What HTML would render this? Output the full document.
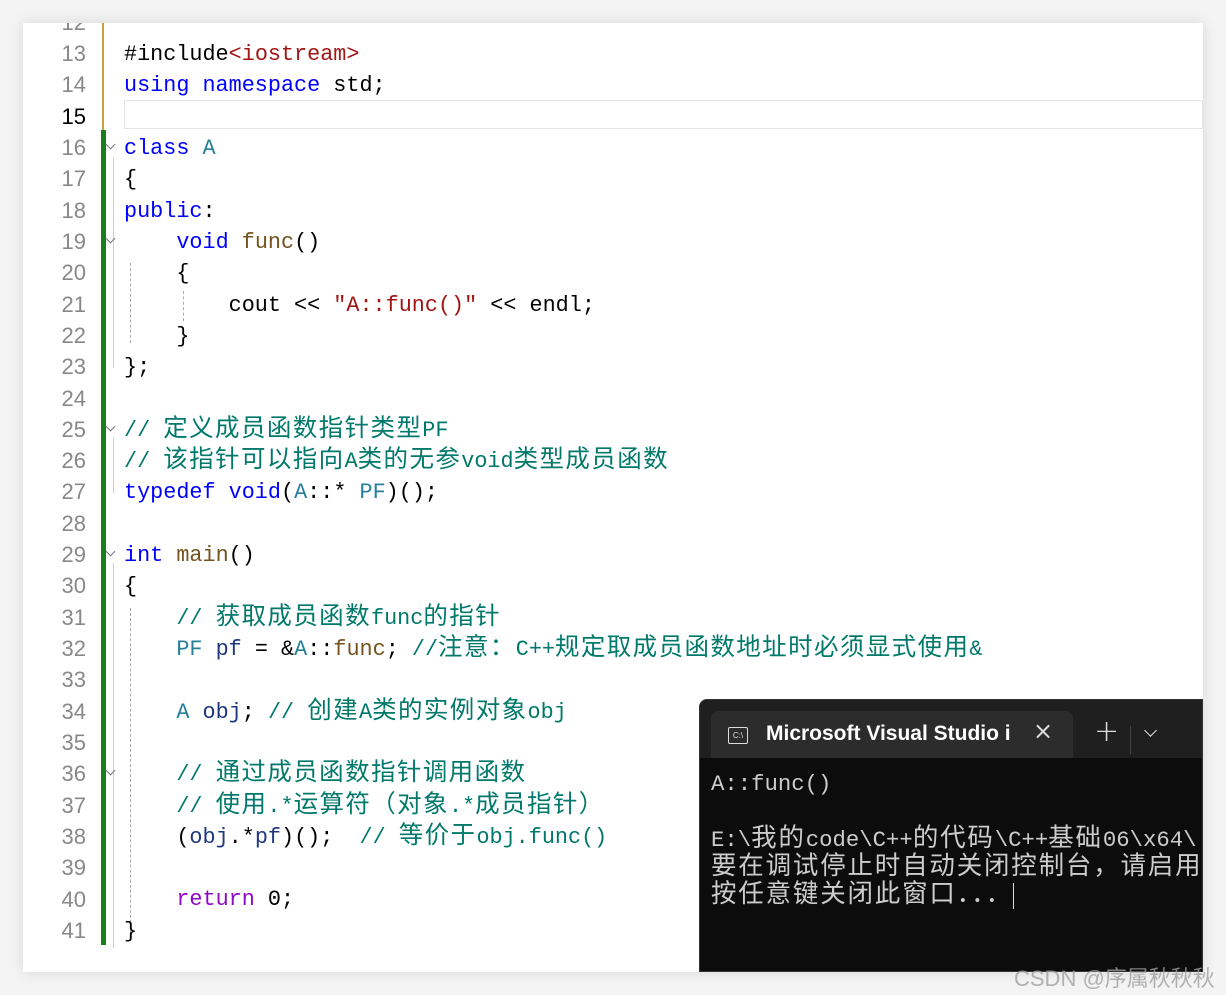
<!DOCTYPE html><html><head><meta charset="utf-8"><style>
body{margin:0;width:1226px;height:995px;background:#f4f4f4;position:relative;overflow:hidden;font-family:"Liberation Mono","Noto Sans CJK SC",monospace}
.card{position:absolute;left:23px;top:23px;width:1180px;height:949px;background:#fff;box-shadow:0 0 14px rgba(0,0,0,.12);overflow:hidden}
.ln{position:absolute;left:0;width:63px;text-align:right;color:#888;font-size:22px;font-family:"Liberation Sans",sans-serif}
.code{position:absolute;left:101px;font-size:21.8px;white-space:pre;color:#000;line-height:31.32px}
.code .cj{font-size:24.5px;letter-spacing:1.4px;line-height:10px}
.tt .cj{font-size:25.5px;letter-spacing:1.8px;line-height:10px}
.k{color:#0000ff}.c{color:#00796b}.f{color:#74531f}.s{color:#a31515}.t{color:#267f99}.v{color:#1f377f}.p{color:#8f08c4}
.term{position:absolute;left:699px;top:699px;width:504px;height:273px;background:#0c0c0c;border-radius:8px 0 0 0;border:1px solid #333;box-sizing:border-box;overflow:hidden}
.bar{position:absolute;left:0;top:0;right:0;height:58px;background:#1f1f1f}
.tab{position:absolute;left:11px;top:11px;width:362px;height:47px;background:#2c2c2c;border-radius:8px 8px 0 0}
.tt{position:absolute;color:#cccccc;font-size:22.3px;white-space:pre;font-family:"Liberation Mono","Noto Sans CJK SC",monospace;line-height:28px}
.fold{position:absolute;left:84px;width:6px;height:6px;border-right:1px solid #777;border-bottom:1px solid #777;transform:rotate(45deg)}
</style></head><body>
<div class="card">
<div style="position:absolute;left:79px;top:0;width:2px;height:107px;background:#c8a040"></div>
<div style="position:absolute;left:78px;top:107px;width:5px;height:815px;background:#1a7f1a"></div>
<div style="position:absolute;left:101px;top:77px;width:1079px;height:29px;border:1px solid #e5e5e5;box-sizing:border-box"></div>
<div style="position:absolute;left:107px;top:240px;height:80px;border-left:1px dashed #aaa"></div>
<div style="position:absolute;left:160px;top:268px;height:30px;border-left:1px dashed #aaa"></div>
<div style="position:absolute;left:107px;top:585px;height:330px;border-left:1px dashed #aaa"></div>
<div style="position:absolute;left:90px;top:135px;height:210px;border-left:1px solid #ccc"></div>
<div style="position:absolute;left:90px;top:415px;height:55px;border-left:1px solid #ccc"></div>
<div style="position:absolute;left:90px;top:540px;height:385px;border-left:1px solid #ccc"></div>
<div class="fold" style="top:118px"></div>
<div class="fold" style="top:212px"></div>
<div class="fold" style="top:400px"></div>
<div class="fold" style="top:525px"></div>
<div class="fold" style="top:744px"></div>
<div id="ln"></div>
<div class="code" style="top:16px">#include<span class="s">&lt;iostream&gt;</span>
<span class="k">using namespace</span> std;

<span class="k">class</span> <span class="t">A</span>
{
<span class="k">public</span>:
    <span class="k">void</span> <span class="f">func</span>()
    {
        cout &lt;&lt; <span class="s">"A::func()"</span> &lt;&lt; endl;
    }
};

<span class="c">// 定义成员函数指针类型PF</span>
<span class="c">// 该指针可以指向A类的无参void类型成员函数</span>
<span class="k">typedef void</span>(<span class="t">A</span>::* <span class="t">PF</span>)();

<span class="k">int</span> <span class="f">main</span>()
{
    <span class="c">// 获取成员函数func的指针</span>
    <span class="t">PF</span> <span class="v">pf</span> = &amp;<span class="t">A</span>::<span class="f">func</span>; <span class="c">//注意：C++规定取成员函数地址时必须显式使用&amp;</span>

    <span class="t">A</span> <span class="v">obj</span>; <span class="c">// 创建A类的实例对象obj</span>

    <span class="c">// 通过成员函数指针调用函数</span>
    <span class="c">// 使用.*运算符（对象.*成员指针）</span>
    (<span class="v">obj</span>.*<span class="v">pf</span>)();  <span class="c">// 等价于obj.func()</span>

    <span class="p">return</span> 0;
}</div>
</div>
<div class="term">
<div class="bar"></div><div class="tab"></div>
<div style="position:absolute;left:28px;top:27px;width:18px;height:15px;border:1.5px solid #ddd;border-radius:2px;color:#ddd;font-size:8px;line-height:15px;text-align:center;font-family:'Liberation Sans'">C:\</div>
<div style="position:absolute;left:66px;top:22px;color:#fff;font-size:21px;font-weight:bold;font-family:'Liberation Sans',sans-serif;white-space:pre">Microsoft Visual Studio i</div>
<div style="position:absolute;left:333px;top:17px;color:#ddd;font-size:24px;font-family:'DejaVu Sans'">×</div>
<div style="position:absolute;left:394px;top:14px;color:#ddd;font-size:30px;font-family:'DejaVu Sans';font-weight:200">+</div>
<div style="position:absolute;left:430px;top:26px;width:1px;height:28px;background:#444"></div>
<div style="position:absolute;left:446px;top:26px;width:8px;height:8px;border-right:1.5px solid #ddd;border-bottom:1.5px solid #ddd;transform:rotate(45deg)"></div>
<div class="tt" style="left:11px;top:70px">A::func()</div>
<div class="tt" style="left:11px;top:126px">E:\我的code\C++的代码\C++基础06\x64\</div>
<div class="tt" style="left:11px;top:154px">要在调试停止时自动关闭控制台，请启用</div>
<div class="tt" style="left:11px;top:182px">按任意键关闭此窗口．．．<span style="border-left:1px solid #ddd"></span></div>
</div>
<div style="position:absolute;left:1014px;top:961px;color:rgba(160,160,160,.8);font-size:22px;font-family:'Liberation Sans','Noto Sans CJK SC',sans-serif;white-space:nowrap">CSDN @序属秋秋秋</div>
<script>
var h='';for(var i=12;i<=41;i++){h+='<div class="ln" style="top:'+(18+(i-13)*31.32)+'px;'+(i==15?'color:#000':'')+'">'+i+'</div>';}
document.getElementById('ln').innerHTML=h;
function wrap(el){
 var w=document.createTreeWalker(el,NodeFilter.SHOW_TEXT),ns=[],n;
 while(n=w.nextNode())ns.push(n);
 ns.forEach(function(t){
  var s=t.nodeValue;if(!/[\u3000-\u9fff\uff00-\uffef]/.test(s))return;
  var span=document.createElement('span');
  span.innerHTML=s.replace(/&/g,'&amp;').replace(/</g,'&lt;').replace(/([\u3000-\u9fff\uff00-\uffef]+)/g,'<span class="cj">$1</span>');
  t.parentNode.replaceChild(span,t);
 });
}
document.querySelectorAll('.code,.tt').forEach(wrap);
</script>
</body></html>
